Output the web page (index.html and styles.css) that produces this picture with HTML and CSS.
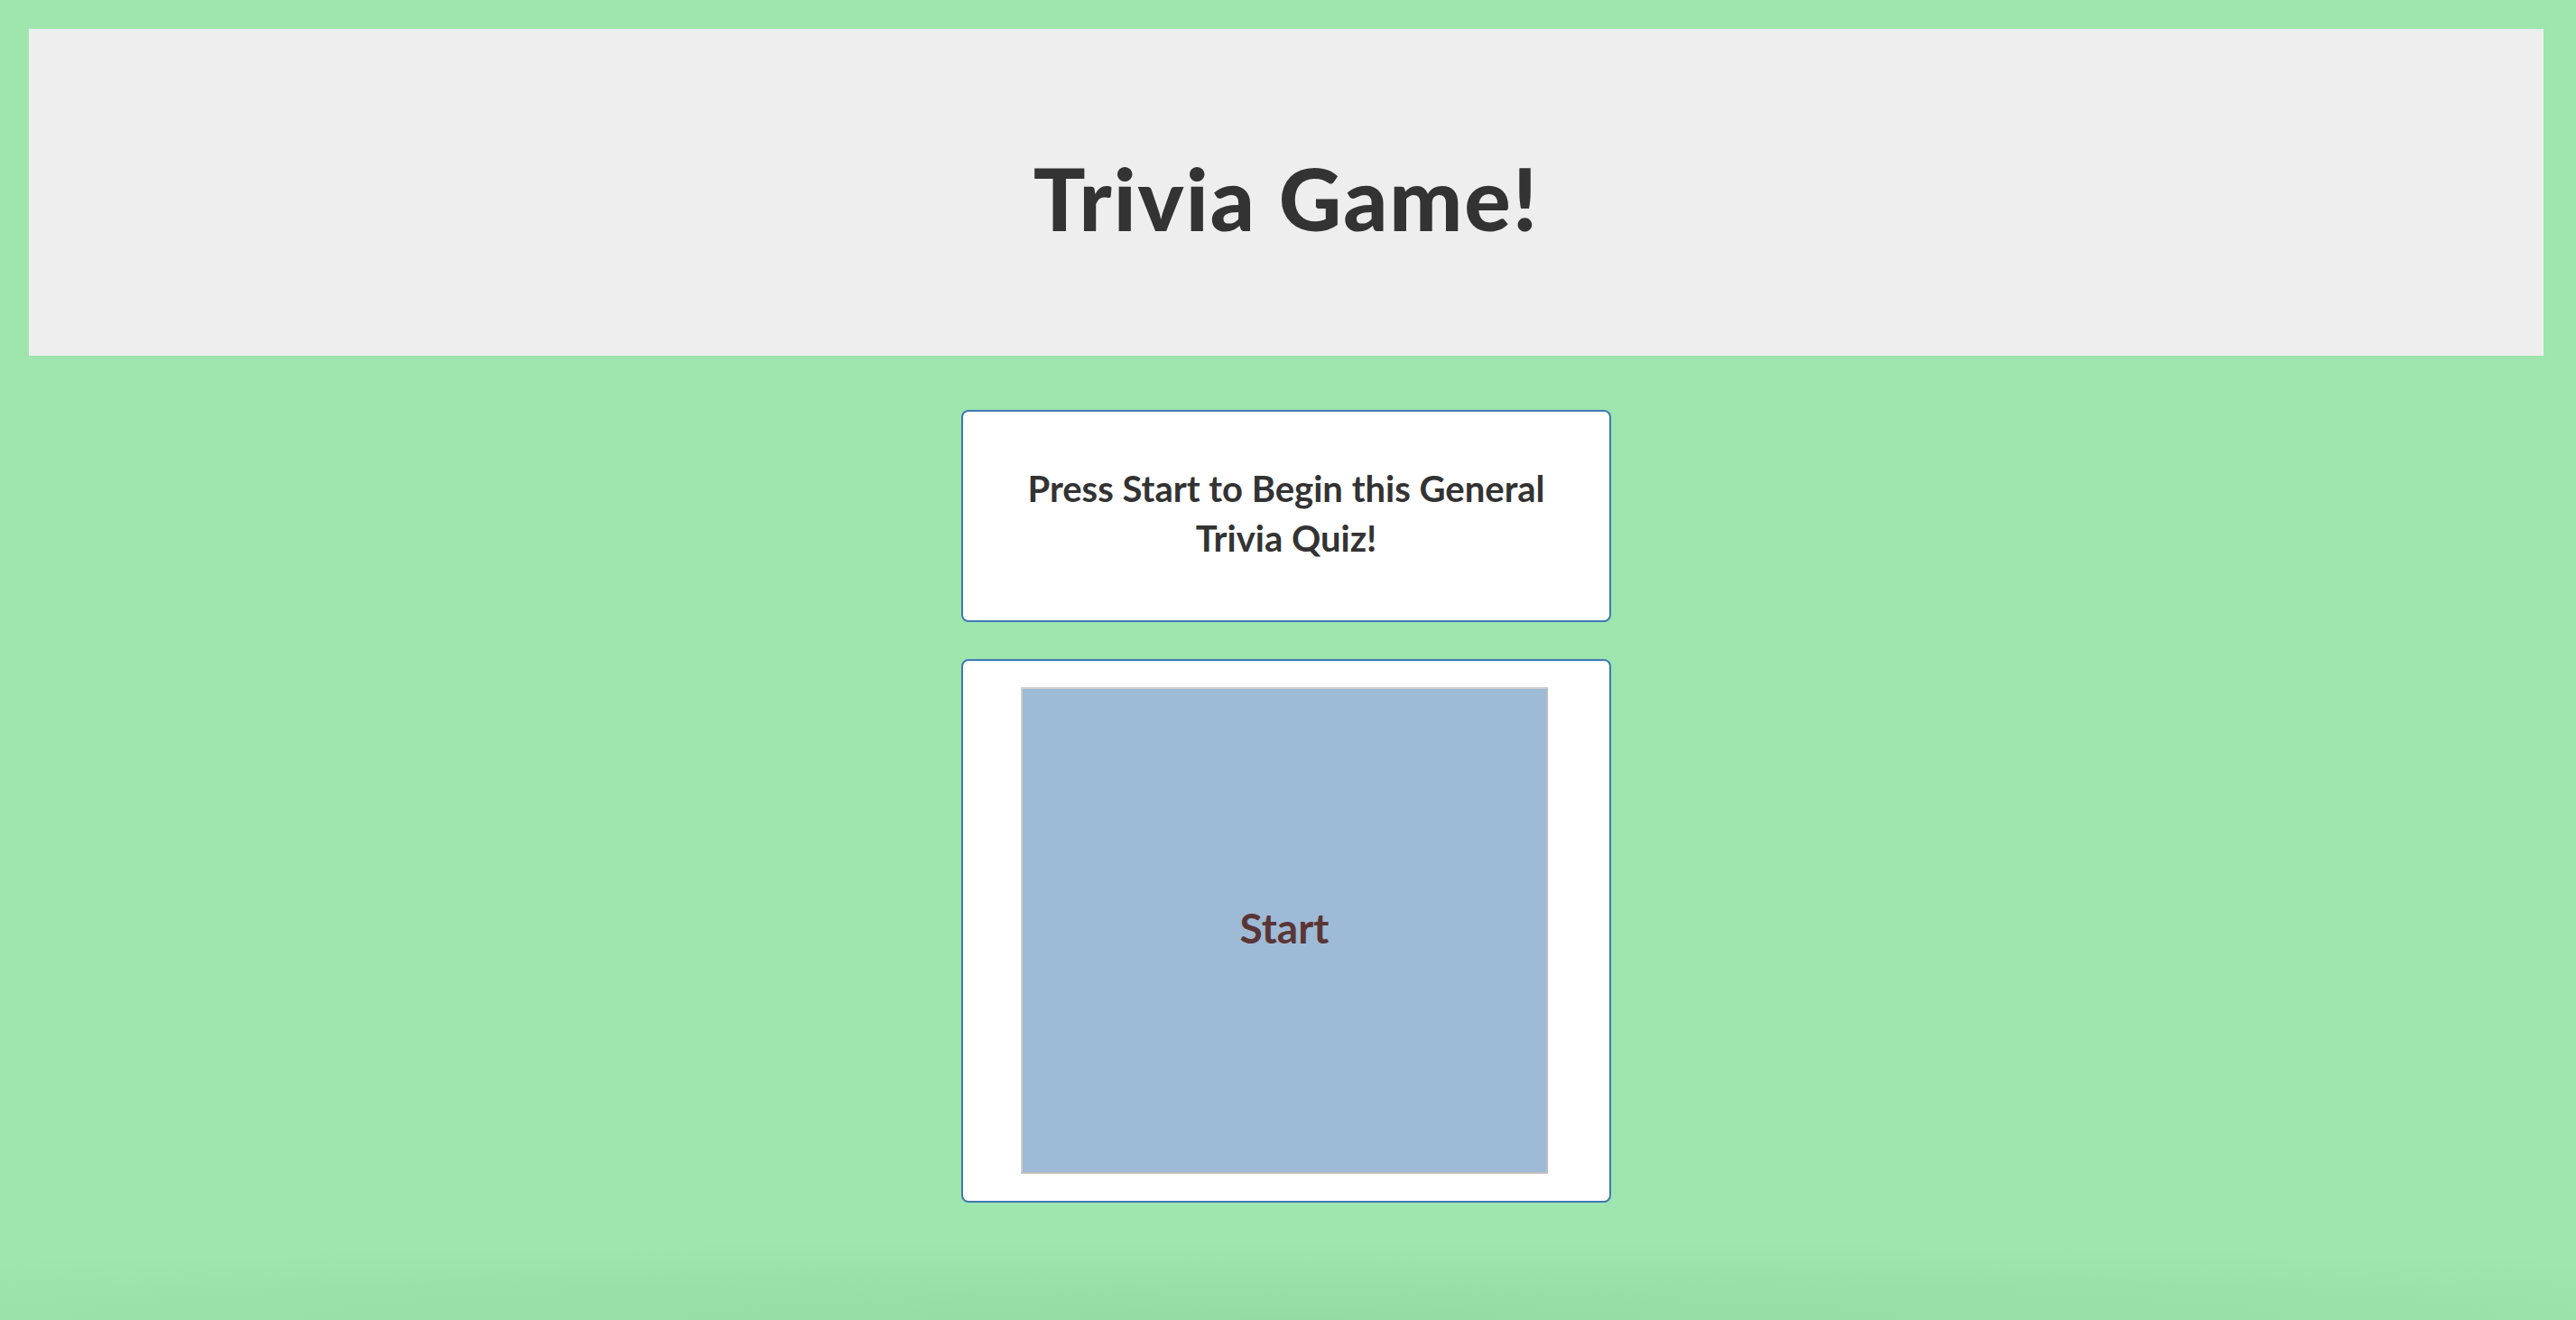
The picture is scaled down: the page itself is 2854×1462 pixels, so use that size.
FILE: index.html
```html
<!DOCTYPE html>
<html lang="en">
<head>
<meta charset="utf-8">
<title>Trivia Game!</title>
<link rel="stylesheet" href="styles.css">
</head>
<body>
  <header class="header">
    <h1 class="title">Trivia Game!</h1>
  </header>
  <main class="main">
    <section class="card card-message">
      <p class="message">Press Start to Begin this General Trivia Quiz!</p>
    </section>
    <section class="card card-actions">
      <button class="start-btn" type="button">Start</button>
    </section>
  </main>
</body>
</html>
```

FILE: styles.css
```css
html, body {
  height: 100%;
}

html {
  overflow: hidden;
}

body {
  margin: 0;
  background: #9ee5ae;
  font-family: "Comic Sans MS", Lato, "Noto Sans", sans-serif;
  color: #333333;
  overflow: hidden;
  position: relative;
}

body::after {
  content: "";
  position: absolute;
  left: 0;
  right: 0;
  bottom: 0;
  height: 90px;
  background: radial-gradient(ellipse 75% 100% at 50% 100%, rgba(20, 80, 30, 0.07), rgba(20, 80, 30, 0.03) 60%, rgba(20, 80, 30, 0) 100%);
  pointer-events: none;
}

.header {
  margin: 32px 36px 0 32px;
  height: 362px;
  background: #eeeeee;
  display: flex;
  align-items: center;
  justify-content: center;
}

.title {
  margin: 0;
  padding-top: 10px;
  font-size: 96px;
  font-weight: 900;
  letter-spacing: 2px;
  color: #333333;
}

.main {
  display: flex;
  flex-direction: column;
  align-items: center;
  gap: 41px;
  margin-top: 60px;
  padding-right: 4px;
}

.card {
  box-sizing: border-box;
  width: 720px;
  background: #ffffff;
  border: 2px solid #3f78b5;
  border-radius: 8px;
}

.card-message {
  height: 235px;
  padding: 0 50px 6px;
  display: flex;
  align-items: center;
  justify-content: center;
}

.message {
  margin: 0;
  text-align: center;
  font-size: 40px;
  font-weight: 700;
  line-height: 55px;
  color: #333333;
}

.card-actions {
  height: 602px;
  padding: 29px 0 0 64px;
}

.start-btn {
  box-sizing: border-box;
  width: 584px;
  height: 539px;
  background: #9dbad6;
  border: 2px solid;
  border-color: #cfcfcf #bdbdbd #bdbdbd #cfcfcf;
  font-family: inherit;
  font-size: 46px;
  font-weight: 700;
  color: #5a3535;
  padding: 0 0 6px;
  cursor: pointer;
}
```
